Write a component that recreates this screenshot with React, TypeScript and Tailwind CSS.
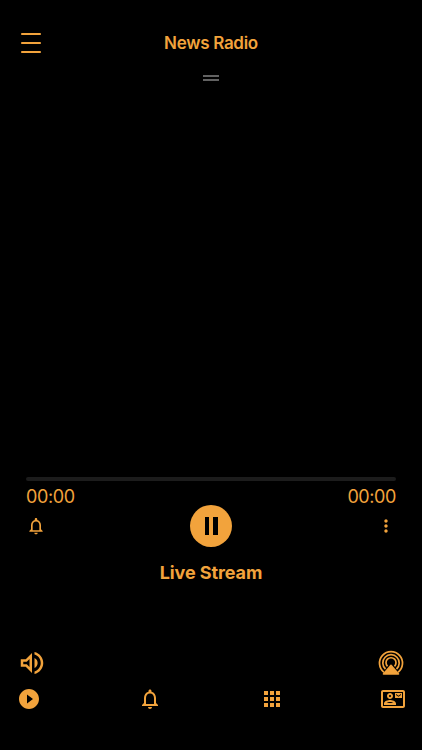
import React, { useState } from 'react';
import {
    MdApps,
    MdMoreVert,
    MdNotificationsNone,
    MdOutlineContactMail,
    MdOutlineVolumeUp,
    MdPlayArrow,
    MdPlayCircleFilled,
} from 'react-icons/md';

const MenuIcon: React.FC<{ className?: string }> = ({ className }) => (
    <svg className={className} viewBox="0 0 20 20" fill="none" stroke="currentColor" strokeWidth="2" strokeLinecap="round">
        <path d="M.9 1h18.2M.9 10h18.2M.9 19h18.2" />
    </svg>
);

const AirplayAudioIcon: React.FC<{ className?: string }> = ({ className }) => (
    <svg className={className} viewBox="0 0 26 26" fill="none" stroke="currentColor" strokeWidth="1.7">
        <path d="M6 22.3A11.5 11.5 0 1 1 20 22.3" />
        <path d="M7.5 19A8.2 8.2 0 1 1 18.5 19" />
        <path d="M9.500 16.3A5 5 0 1 1 16.5 16.3" />
        <path d="M12.4 14.7a.9.9 0 0 1 1.2 0l7.5 8.8c.5.6.2 1.2-.6 1.2H5.5c-.8 0-1.1-.6-.6-1.2z" fill="currentColor" stroke="none" />
    </svg>
);

const App: React.FC = () => {
    const [isPlaying, setIsPlaying] = useState(true);

    return (
        <div className="flex h-[750px] w-[422px] flex-col overflow-hidden bg-black font-['Inter',sans-serif] text-[#f2a33c]">
            <header className="grid h-[60px] grid-cols-[1fr_auto_1fr] items-end px-[21px] pb-[7px]">
                <button type="button" aria-label="Menu" className="w-5">
                    <MenuIcon className="block h-5 w-5" />
                </button>
                <h1 className="text-[17px] leading-5 font-semibold tracking-[-0.3px]">News Radio</h1>
            </header>

            <div className="mx-auto mt-[15px] flex flex-col gap-[2px]">
                <div className="h-[2px] w-4 bg-[#626262]" />
                <div className="h-[2px] w-4 bg-[#626262]" />
            </div>

            <main className="flex flex-grow flex-col justify-end pb-[65px]">
                <div className="px-[26px]">
                    <div className="h-1 rounded-full bg-[#1c1c1c]" />
                    <div className="mt-[6px] flex justify-between text-[18px] leading-5 tracking-[-0.4px]">
                        <span>00:00</span>
                        <span>00:00</span>
                    </div>
                </div>
                <div className="-mt-[2px] flex items-center justify-between px-[26px]">
                    <button type="button" aria-label="Alerts">
                        <MdNotificationsNone className="block h-5 w-5" />
                    </button>
                    <button
                        type="button"
                        aria-label={isPlaying ? 'Pause' : 'Play'}
                        onClick={() => setIsPlaying(!isPlaying)}
                        className="flex h-[42px] w-[42px] items-center justify-center gap-1 rounded-full bg-[#f2a33c]"
                    >
                        {isPlaying ? (
                            <>
                                <span className="h-[18px] w-[4.5px] bg-black" />
                                <span className="h-[18px] w-[4.5px] bg-black" />
                            </>
                        ) : (
                            <MdPlayArrow className="h-7 w-7 text-black" />
                        )}
                    </button>
                    <button type="button" aria-label="More">
                        <MdMoreVert className="block h-5 w-5" />
                    </button>
                </div>
                <h2 className="mt-4 text-center text-[18px] leading-5 font-bold tracking-[-0.1px]">Live Stream</h2>
            </main>

            <footer className="h-[102px]">
                <div className="flex h-[30px] items-center justify-between pr-[18px] pl-[17px]">
                    <MdOutlineVolumeUp className="h-[30px] w-[30px]" />
                    <AirplayAudioIcon className="h-[26px] w-[26px]" />
                </div>
                <nav className="mt-[9px] flex h-6 items-center justify-between px-[17px]">
                    <MdPlayCircleFilled className="h-6 w-6" />
                    <MdNotificationsNone className="h-6 w-6" />
                    <MdApps className="h-6 w-6" />
                    <MdOutlineContactMail className="h-6 w-6" />
                </nav>
            </footer>
        </div>
    );
};

export default App;
